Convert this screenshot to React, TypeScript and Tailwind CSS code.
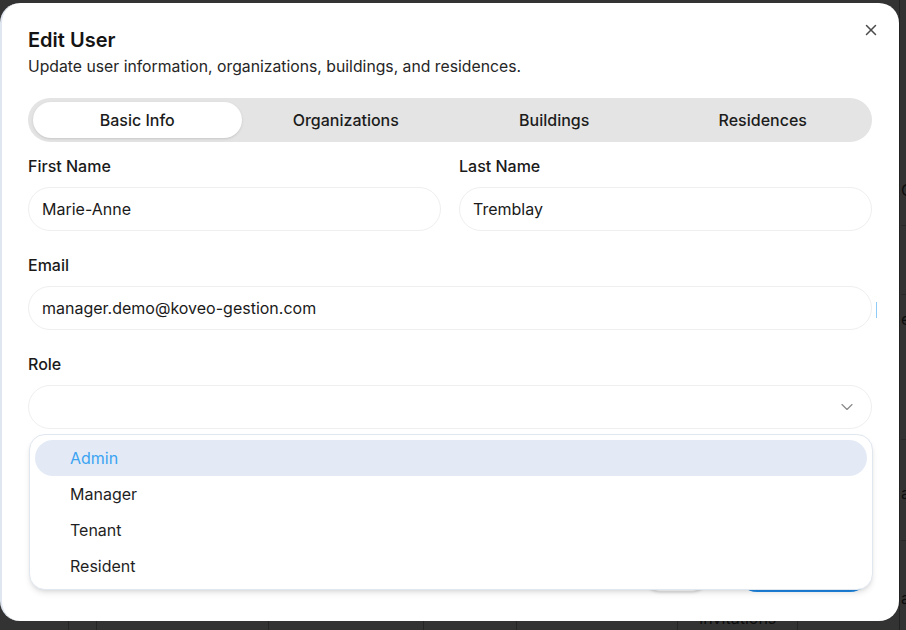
import React from 'react';
import { X, ChevronDown } from 'lucide-react';

const tabs = ["Basic Info", "Organizations", "Buildings", "Residences"];
const roles = ["Admin", "Manager", "Tenant", "Resident"];

// widths of the table columns behind the overlay (bottom strip)
const bgCols = [69, 28, 172, 155, 94, 161, 120, 101];

const Field: React.FC<{ label: string; value?: string; className?: string; children?: React.ReactNode }> = ({ label, value, className, children }) => (
  <div className={className}>
    <div className="text-[16px] leading-[24px] font-medium text-[#1a1a1a]">{label}</div>
    {children ?? (
      <div className="mt-[9px] flex h-[44px] items-center rounded-full border border-[#efefef] bg-white px-[13px] text-[16px] text-[#1a1a1a]">
        {value}
      </div>
    )}
  </div>
);

const App: React.FC = () => {
  return (
    <div className="relative h-[630px] w-[906px] overflow-hidden bg-white font-['Inter',sans-serif]">
      {/* page underneath the dialog */}
      <div className="absolute inset-0 flex bg-white text-[16px] leading-[24px] text-[#444]">
        <div className="flex w-[900px] flex-col border-r border-[#aaa]">
          <div className="h-[600px]" />
          <div className="flex flex-1">
            {bgCols.map((w, i) => (
              <div
                key={i}
                style={{ width: w }}
                className={`pt-[16px] text-center ${i < bgCols.length - 1 ? 'border-r border-[#bbb]' : ''}`}
              >
                {i === 6 ? 'Invitations' : ''}
              </div>
            ))}
          </div>
        </div>
        <div className="flex flex-1 flex-col overflow-hidden whitespace-nowrap pl-[1px]">
          <div className="h-[178px]" />
          <div className="h-[24px]">Co</div>
          <div className="h-[24px] border-b border-[#ccc]" />
          <div className="h-[69px] border-b border-[#ccc]" />
          <div className="h-[12px]" />
          <div className="h-[24px]">es</div>
          <div className="h-[109px] border-b border-[#ccc]" />
          <div className="h-[41px]" />
          <div className="h-[24px]">ag</div>
          <div className="h-[36px] border-b border-[#ccc]" />
          <div className="h-[45px]" />
          <div className="h-[24px]">ag</div>
        </div>
      </div>
      <div className="absolute inset-0 bg-black/80" />

      {/* dialog */}
      <div className="absolute left-0 top-[3px] h-[618px] w-[899px] rounded-[20px] border-l-2 border-[#dfe6ef] bg-white pl-[26px] pr-[27px] pt-[23px]">
        <button className="absolute right-[19px] top-[18px] text-[#4b4b4b]">
          <X size={18} strokeWidth={2} />
        </button>

        <h2 className="text-[20px] leading-[28px] font-semibold text-[#141414]">Edit User</h2>
        <p className="mt-[1px] text-[15.75px] leading-[24px] text-[#262626]">
          Update user information, organizations, buildings, and residences.
        </p>

        <div className="mt-[19px] grid h-[44px] grid-cols-4 rounded-full bg-[#e4e4e4] px-[5px] py-[4px]">
          {tabs.map((t, i) => (
            <div
              key={t}
              className={`flex items-center justify-center rounded-full text-[16px] font-medium text-[#1c1c1c] ${i === 0 ? 'bg-white shadow-sm' : ''}`}
            >
              {t}
            </div>
          ))}
        </div>

        <div className="mt-[12px] grid grid-cols-2 gap-x-[18px]">
          <Field label="First Name" value="Marie-Anne" />
          <Field label="Last Name" value="Tremblay" />
        </div>

        <Field label="Email" className="relative mt-[22px]">
          <div className="relative mt-[9px] flex h-[44px] items-center rounded-full border border-[#efefef] bg-white px-[13px] text-[16px] text-[#1a1a1a]">
            manager.demo@koveo-gestion.com
            <span className="absolute -right-[6px] top-[15px] h-[16px] w-[1px] bg-[#8ecbf7]" />
          </div>
        </Field>

        <Field label="Role" className="mt-[22px]">
          <div className="mt-[9px] flex h-[44px] items-center justify-end rounded-full border border-[#efefef] bg-white pr-[14px] text-[#8a8a8a]">
            <ChevronDown size={20} strokeWidth={1.4} />
          </div>
        </Field>

        <div className="mt-[123px] flex justify-end gap-[26px] pr-[2px]">
          <button className="h-10 w-[70px] rounded-full border border-[#e5e5e5] bg-white text-[16px] shadow-sm">Cancel</button>
          <button className="h-10 w-[133px] rounded-full bg-[#1e88e5] text-[16px] text-white">Save</button>
        </div>
      </div>

      {/* role dropdown */}
      <div className="absolute left-[29px] top-[434px] w-[844px] rounded-[16px] border border-[#e1e7ef] bg-white p-[5px] shadow-md">
        {roles.map((r, i) => (
          <div
            key={r}
            className={`flex h-9 items-center rounded-full pl-[35px] text-[16px] ${i === 0 ? 'bg-[#e3eaf5] text-[#3ba3f2]' : 'text-[#1f1f1f]'}`}
          >
            {r}
          </div>
        ))}
      </div>
    </div>
  );
};

export default App;
